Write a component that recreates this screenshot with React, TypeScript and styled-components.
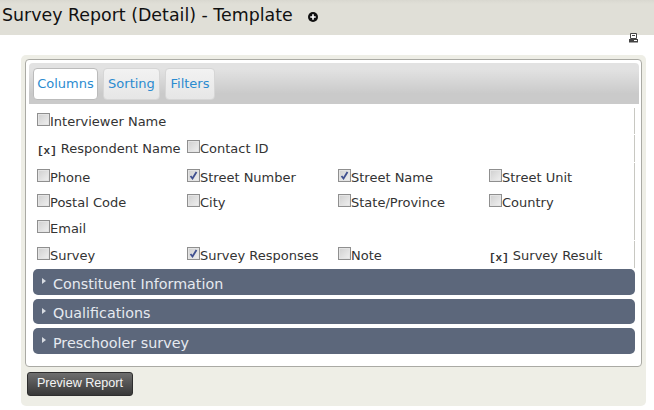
import React from "react";
import styled, { createGlobalStyle } from "styled-components";

const Global = createGlobalStyle`
  html, body { margin: 0; padding: 0; background: #fff; }
  body { font-family: "DejaVu Sans", Verdana, sans-serif; color: #333; overflow: hidden; }
`;

const Page = styled.div`
  width: 654px;
  height: 410px;
  display: flex;
  flex-direction: column;
`;

const Header = styled.header`
  height: 35px;
  box-sizing: border-box;
  background: linear-gradient(#d9d8d0, #e0dfd7 4px);
  display: flex;
  align-items: flex-start;
  padding: 4px 0 0 2px;
  gap: 15px;
`;

const Title = styled.h1`
  margin: 0;
  font-size: 17.4px;
  line-height: 22px;
  font-weight: 400;
  color: #111;
  white-space: nowrap;
`;

const AddIcon = styled.svg`
  width: 10px;
  height: 10px;
  margin-top: 8px;
`;

const PrintBar = styled.div`
  height: 20px;
  display: flex;
  justify-content: flex-end;
  padding-right: 16px;
`;

const PrintIcon = styled.svg`
  width: 9px;
  height: 10px;
  margin-top: -2px;
`;

const Outer = styled.section`
  width: 625px;
  height: 351px;
  margin-left: 21px;
  box-sizing: border-box;
  background: #eeeee6;
  border-radius: 5px;
  padding: 4px;
`;

const Inner = styled.div`
  height: 308px;
  box-sizing: border-box;
  background: #fff;
  border: 1px solid #aaaaa4;
  border-radius: 4px;
  padding: 3px 2px 0 3px;
`;

const TabBar = styled.div`
  height: 41px;
  box-sizing: border-box;
  background: linear-gradient(#e2e2e2 15%, #cacaca 75%);
  border-radius: 4px 4px 0 0;
  padding: 5px 0 0 4px;
  display: flex;
  gap: 5px;
  margin-bottom: 4px;
`;

const Tab = styled.div<{ $active?: boolean; $w: number }>`
  width: ${(p) => p.$w}px;
  height: 32px;
  box-sizing: border-box;
  border: 1px solid ${(p) => (p.$active ? "#bbb" : "#d6d6d6")};
  border-radius: 4px;
  background: ${(p) => (p.$active ? "#fff" : "linear-gradient(#f2f2f2, #e6e6e6)")};
  color: #2b8bd0;
  font-size: 13px;
  line-height: 30px;
  text-align: center;
`;

const Group = styled.div<{ $h: number; $pt: number; $rows?: string }>`
  height: ${(p) => p.$h}px;
  margin: 0 4px 1px 4px;
  box-sizing: border-box;
  border-right: 1px solid #c8c8c2;
  display: grid;
  grid-template-columns: 150px 151px 151px 151px;
  grid-auto-rows: ${(p) => p.$rows ?? "auto"};
  padding: ${(p) => p.$pt}px 0 0 4px;
`;

const Field = styled.div`
  display: flex;
  align-items: flex-start;
  font-size: 13px;
  line-height: 16px;
  color: #333;
  white-space: nowrap;
`;

const Box = styled.span`
  width: 13px;
  height: 13px;
  box-sizing: border-box;
  border: 1px solid #8f8f8f;
  background: linear-gradient(135deg, #cfcfcf, #f0f0f0);
  box-shadow: inset 0 0 0 1px #e4e4e4;
  margin-top: -1px;
  display: flex;
  align-items: center;
  justify-content: center;
`;

const Locked = styled.span`
  font-family: "Liberation Mono", monospace;
  font-size: 11px;
  font-weight: 700;
  margin: 2px 4px 0 0;
  color: #333;
`;

const Bars = styled.div`
  margin: 1px 4px 0;
  display: flex;
  flex-direction: column;
  gap: 4px;
`;

const Bar = styled.div<{ $h: number }>`
  height: ${(p) => p.$h}px;
  background: #5c677b;
  border-radius: 5px;
  color: #e6eaf0;
  font-size: 14.3px;
  line-height: ${(p) => p.$h + 4}px;
  padding-left: 20px;
  position: relative;
`;

const Caret = styled.i`
  position: absolute;
  left: 9px;
  top: 9px;
  width: 0;
  height: 0;
  border-left: 4px solid #d8dce2;
  border-top: 3.5px solid transparent;
  border-bottom: 3.5px solid transparent;
`;

const Preview = styled.button`
  display: block;
  width: 106px;
  height: 24px;
  margin: 5px 0 0 2px;
  padding: 0 0 2px;
  border: 1px solid #2e2e2e;
  border-radius: 3px;
  background: linear-gradient(#6e6e6e, #383838);
  color: #f4f4f4;
  font-family: "Liberation Sans", Arial, sans-serif;
  font-size: 12.6px;
`;

type F = { label: string; checked?: boolean; locked?: boolean };

const Item = ({ label, checked, locked }: F) => (
  <Field>
    {locked ? (
      <Locked>[x]</Locked>
    ) : (
      <Box>
        {checked && (
          <svg width="9" height="9" viewBox="0 0 9 9">
            <path d="M1.5 5 L3.5 7.5 L7.5 1" fill="none" stroke="#3f4f8f" strokeWidth="1.8" />
          </svg>
        )}
      </Box>
    )}
    <span>{label}</span>
  </Field>
);

const address: F[] = [
  { label: "Phone" },
  { label: "Street Number", checked: true },
  { label: "Street Name", checked: true },
  { label: "Street Unit" },
  { label: "Postal Code" },
  { label: "City" },
  { label: "State/Province" },
  { label: "Country" },
  { label: "Email" },
];

const survey: F[] = [
  { label: "Survey" },
  { label: "Survey Responses", checked: true },
  { label: "Note" },
  { label: "Survey Result", locked: true },
];

export default function App() {
  return (
    <Page>
      <Global />
      <Header>
        <Title>Survey Report (Detail) - Template</Title>
        <AddIcon viewBox="0 0 11 11">
          <circle cx="5.5" cy="5.5" r="5.5" fill="#111" />
          <path d="M5.5 2.5v6M2.5 5.5h6" stroke="#fff" strokeWidth="1.8" />
        </AddIcon>
      </Header>
      <PrintBar>
        <PrintIcon viewBox="0 0 9 10">
          <path d="M1.5.5h6v5h-6z" fill="#fff" stroke="#444" />
          <path d="M3 2.5h3" stroke="#444" />
          <path d="M0 6h9v3.5H0z" fill="#444" />
          <path d="M5 7.5h3" stroke="#fff" />
        </PrintIcon>
      </PrintBar>
      <Outer>
        <Inner>
          <TabBar>
            <Tab $active $w={65}>Columns</Tab>
            <Tab $w={57}>Sorting</Tab>
            <Tab $w={50}>Filters</Tab>
          </TabBar>
          <Group $h={26} $pt={6}>
            <Item label="Interviewer Name" />
          </Group>
          <Group $h={27} $pt={6}>
            <Item label="Respondent Name" locked />
            <Item label="Contact ID" />
          </Group>
          <Group $h={77} $pt={7} $rows="25.3px">
            {address.map((f) => (
              <Item key={f.label} {...f} />
            ))}
          </Group>
          <Group $h={27} $pt={7}>
            {survey.map((f) => (
              <Item key={f.label} {...f} />
            ))}
          </Group>
          <Bars>
            <Bar $h={26}><Caret />Constituent Information</Bar>
            <Bar $h={25}><Caret />Qualifications</Bar>
            <Bar $h={26}><Caret />Preschooler survey</Bar>
          </Bars>
        </Inner>
        <Preview>Preview Report</Preview>
      </Outer>
    </Page>
  );
}
